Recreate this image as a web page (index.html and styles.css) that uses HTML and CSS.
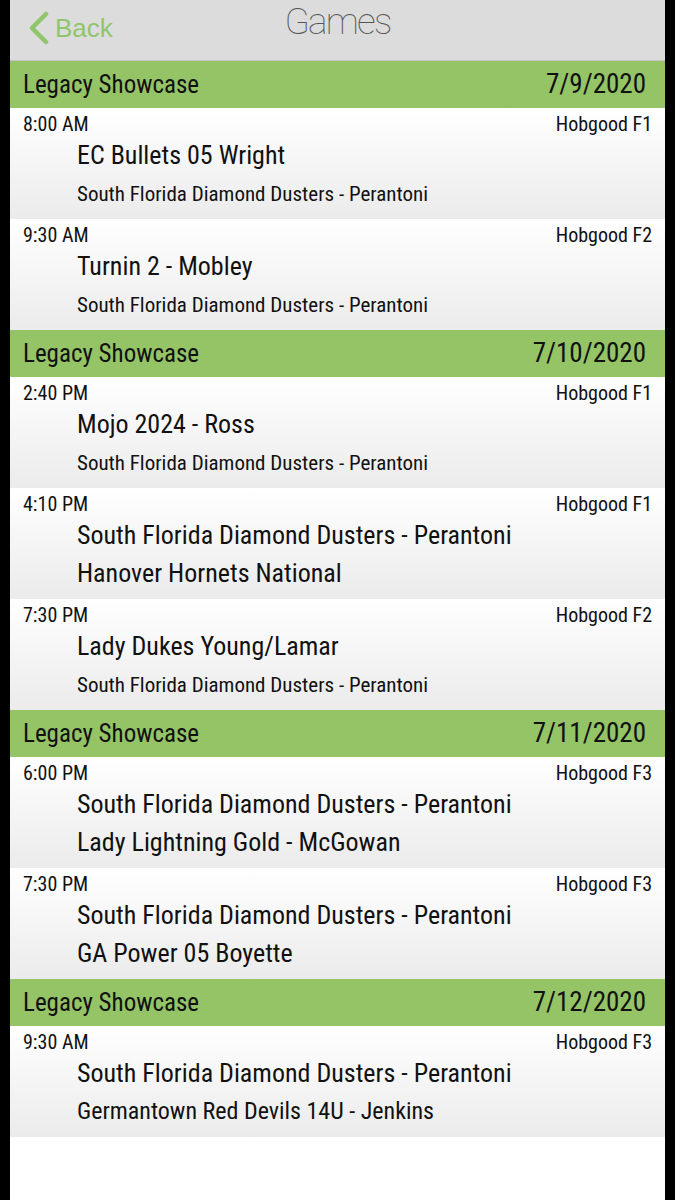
FILE: index.html
```html
<!DOCTYPE html>
<html lang="en">

<head>
    <meta charset="UTF-8">
    <meta name="viewport" content="width=device-width, initial-scale=1.0">
    <title>Games</title>
    <link rel="stylesheet" href="styles.css">
</head>

<body>
    <div class="phone">
        <!-- top bar -->
        <div class="nav">
            <a class="back" href="#">
                <svg class="chevron" width="22" height="34" viewBox="0 0 22 34">
                    <path d="M18 3 L4 17 L18 31" fill="none" stroke="currentColor" stroke-width="4.5"
                        stroke-linecap="round" stroke-linejoin="round" />
                </svg>
                Back
            </a>
            <div class="title">Games</div>
            <div></div>
        </div>

        <!-- 7/9 -->
        <div class="event-head"><span class="event-name">Legacy Showcase</span><span>7/9/2020</span></div>
        <div class="game">
            <div class="game-top"><span>8:00 AM</span><span>Hobgood F1</span></div>
            <div class="team big">EC Bullets 05 Wright</div>
            <div class="team small">South Florida Diamond Dusters - Perantoni</div>
        </div>
        <div class="game">
            <div class="game-top"><span>9:30 AM</span><span>Hobgood F2</span></div>
            <div class="team big">Turnin 2 - Mobley</div>
            <div class="team small">South Florida Diamond Dusters - Perantoni</div>
        </div>

        <!-- 7/10 -->
        <div class="event-head"><span class="event-name">Legacy Showcase</span><span>7/10/2020</span></div>
        <div class="game">
            <div class="game-top"><span>2:40 PM</span><span>Hobgood F1</span></div>
            <div class="team big">Mojo 2024 - Ross</div>
            <div class="team small">South Florida Diamond Dusters - Perantoni</div>
        </div>
        <div class="game">
            <div class="game-top"><span>4:10 PM</span><span>Hobgood F1</span></div>
            <div class="team big">South Florida Diamond Dusters - Perantoni</div>
            <div class="team big second">Hanover Hornets National</div>
        </div>
        <div class="game">
            <div class="game-top"><span>7:30 PM</span><span>Hobgood F2</span></div>
            <div class="team big">Lady Dukes Young/Lamar</div>
            <div class="team small">South Florida Diamond Dusters - Perantoni</div>
        </div>

        <!-- 7/11 -->
        <div class="event-head"><span class="event-name">Legacy Showcase</span><span>7/11/2020</span></div>
        <div class="game">
            <div class="game-top"><span>6:00 PM</span><span>Hobgood F3</span></div>
            <div class="team big">South Florida Diamond Dusters - Perantoni</div>
            <div class="team big second">Lady Lightning Gold - McGowan</div>
        </div>
        <div class="game">
            <div class="game-top"><span>7:30 PM</span><span>Hobgood F3</span></div>
            <div class="team big">South Florida Diamond Dusters - Perantoni</div>
            <div class="team big second">GA Power 05 Boyette</div>
        </div>

        <!-- 7/12 -->
        <div class="event-head"><span class="event-name">Legacy Showcase</span><span>7/12/2020</span></div>
        <div class="game">
            <div class="game-top"><span>9:30 AM</span><span>Hobgood F3</span></div>
            <div class="team big">South Florida Diamond Dusters - Perantoni</div>
            <div class="team mid">Germantown Red Devils 14U - Jenkins</div>
        </div>
    </div>
</body>

</html>
```

FILE: styles.css
```css
body {
    margin: 0;
    background-color: #000;
}

.phone {
    margin: 0 10px;
    min-height: 1200px;
    background-color: #fff;
    color: #111;
    font-family: "Roboto Condensed", Roboto, sans-serif;
    font-stretch: condensed;
}

/* top bar */
.nav {
    height: 60px;
    border-bottom: 1px solid #c6c6c6;
    background-color: #dcdcdc;
    display: grid;
    grid-template-columns: 1fr auto 1fr;
    align-items: start;
}

.back {
    display: flex;
    align-items: center;
    gap: 5px;
    padding: 11px 0 0 18px;
    color: #8fc66c;
    text-decoration: none;
    font-family: "Liberation Sans", Arial, sans-serif;
    font-stretch: normal;
    font-size: 26px;
}

.title {
    font-family: Roboto, "Open Sans", sans-serif;
    font-stretch: normal;
    font-weight: 100;
    font-size: 37px;
    line-height: 44px;
    letter-spacing: -1.8px;
    color: #555;
}

/* green date bar */
.event-head {
    height: 47px;
    line-height: 47px;
    padding: 0 19px 0 13px;
    background-color: #94c466;
    font-size: 27px;
    display: flex;
    justify-content: space-between;
}

.event-name {
    font-size: 25px;
}

/* one game */
.game {
    height: 111px;
    padding: 0 13px;
    background: linear-gradient(#fff, #ebebeb);
}

.game-top {
    height: 32px;
    line-height: 32px;
    font-size: 20px;
    display: flex;
    justify-content: space-between;
}

.team {
    padding-left: 54px;
    white-space: nowrap;
}

.big {
    font-size: 26px;
    line-height: 30px;
}

.big.second {
    line-height: 46px;
}

.small {
    font-size: 21px;
    line-height: 49px;
}

.mid {
    font-size: 24px;
    line-height: 47px;
}
```
